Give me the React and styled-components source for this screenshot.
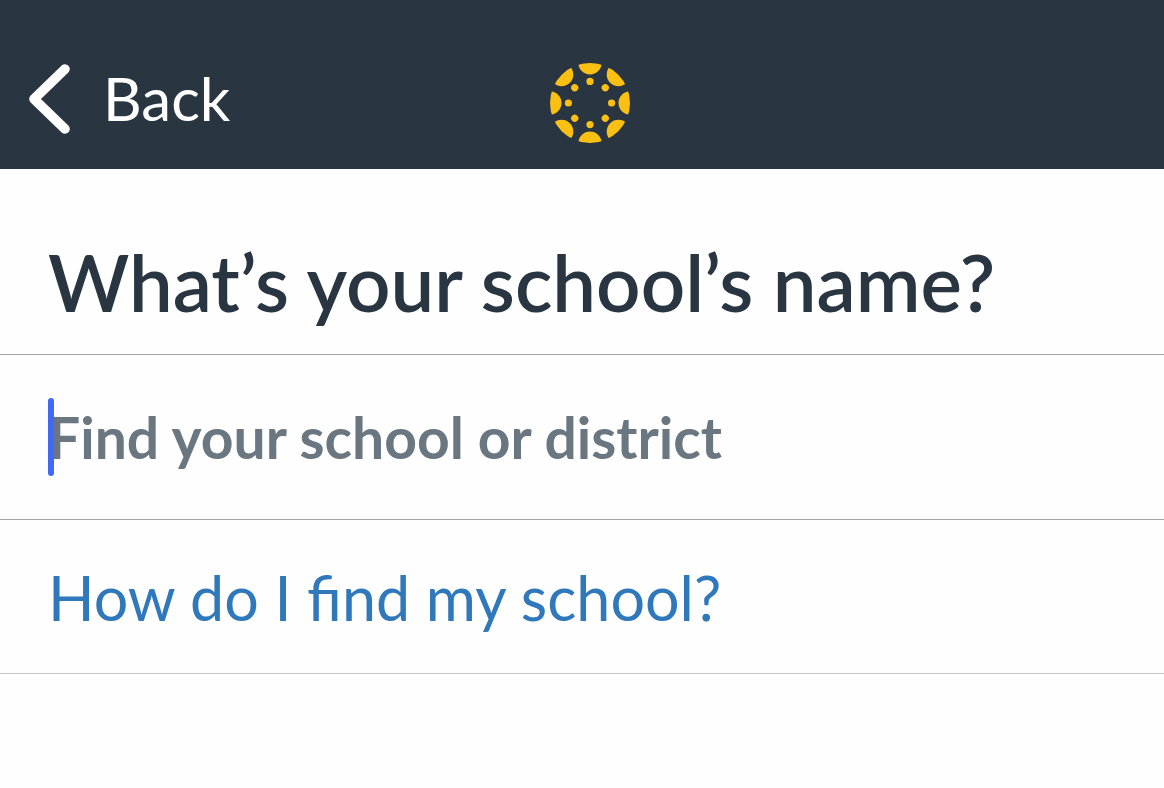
import { useState } from "react";
import styled, { createGlobalStyle } from "styled-components";

const GlobalStyle = createGlobalStyle`
  * {
    box-sizing: border-box;
  }

  body {
    margin: 0;
    background: #fefefe;
    font-family: Lato, "Open Sans", sans-serif;
  }
`;

const Header = styled.header`
  display: grid;
  grid-template-columns: 1fr auto 1fr;
  align-items: start;
  padding: 63px 12px 26px 28px;
  background: #293540;
`;

const BackButton = styled.button`
  display: flex;
  align-items: flex-start;
  justify-self: start;
  gap: 31px;
  padding: 0;
  border: none;
  background: none;
  color: #ffffff;
  font-family: inherit;
  font-size: 60px;
  line-height: 70px;
  cursor: pointer;
`;

const Row = styled.div`
  position: relative;
  padding: ${(props) => props.$padding};
  border-bottom: 1px solid ${(props) => props.$line || "#a0a2a5"};
`;

const Title = styled.h1`
  margin: 0;
  color: #293540;
  font-size: 78px;
  font-weight: 600;
  line-height: 96px;
`;

const SearchInput = styled.input`
  display: block;
  width: 100%;
  height: 78px;
  padding: 0;
  border: none;
  outline: none;
  background: transparent;
  color: #293540;
  caret-color: transparent;
  font-family: inherit;
  font-size: 57px;
  font-weight: 700;

  &::placeholder {
    color: #6b7780;
    opacity: 1;
  }
`;

// thick rounded cursor drawn over the start of the field
const Caret = styled.span`
  position: absolute;
  top: 43px;
  left: 48px;
  width: 6px;
  height: 78px;
  border-radius: 3px;
  background: #4169f5;
`;

const HelpLink = styled.a`
  display: block;
  color: #2f78bb;
  font-size: 61px;
  line-height: 76px;
  text-decoration: none;
`;

function ChevronLeft() {
  return (
    <svg width="44" height="72" viewBox="0 0 44 72" fill="none" aria-hidden="true">
      <path
        d="M37 6 L6 36 L37 66"
        stroke="#ffffff"
        strokeWidth="9.6"
        strokeLinecap="round"
        strokeLinejoin="round"
      />
    </svg>
  );
}

const angles = [0, 45, 90, 135, 180, 225, 270, 315];

function Logo() {
  return (
    <svg width="80" height="80" viewBox="-40 -40 80 80" role="img" aria-label="Canvas">
      <clipPath id="ring">
        <circle r="40" />
      </clipPath>
      <g fill="#fbc112" clipPath="url(#ring)">
        {angles.map((angle) => (
          <g key={angle} transform={`rotate(${angle})`}>
            <circle cy="-40.2" r="11.7" />
            <circle cy="-21.6" r="3.6" />
          </g>
        ))}
      </g>
    </svg>
  );
}

export default function App() {
  const [school, setSchool] = useState("");

  return (
    <>
      <GlobalStyle />
      <Header>
        <BackButton type="button">
          <ChevronLeft />
          Back
        </BackButton>
        <Logo />
      </Header>
      <main>
        <Row $padding="65px 48px 24px">
          <Title id="school-title">What’s your school’s name?</Title>
        </Row>
        <Row $padding="43px 48px">
          <SearchInput
            type="text"
            name="school"
            aria-labelledby="school-title"
            autoComplete="off"
            placeholder="Find your school or district"
            value={school}
            onChange={(e) => setSchool(e.target.value)}
          />
          {school === "" && <Caret />}
        </Row>
        <Row $padding="40px 48px 37px" $line="#c4c6c8">
          <HelpLink href="#help">How do I find my school?</HelpLink>
        </Row>
      </main>
    </>
  );
}
